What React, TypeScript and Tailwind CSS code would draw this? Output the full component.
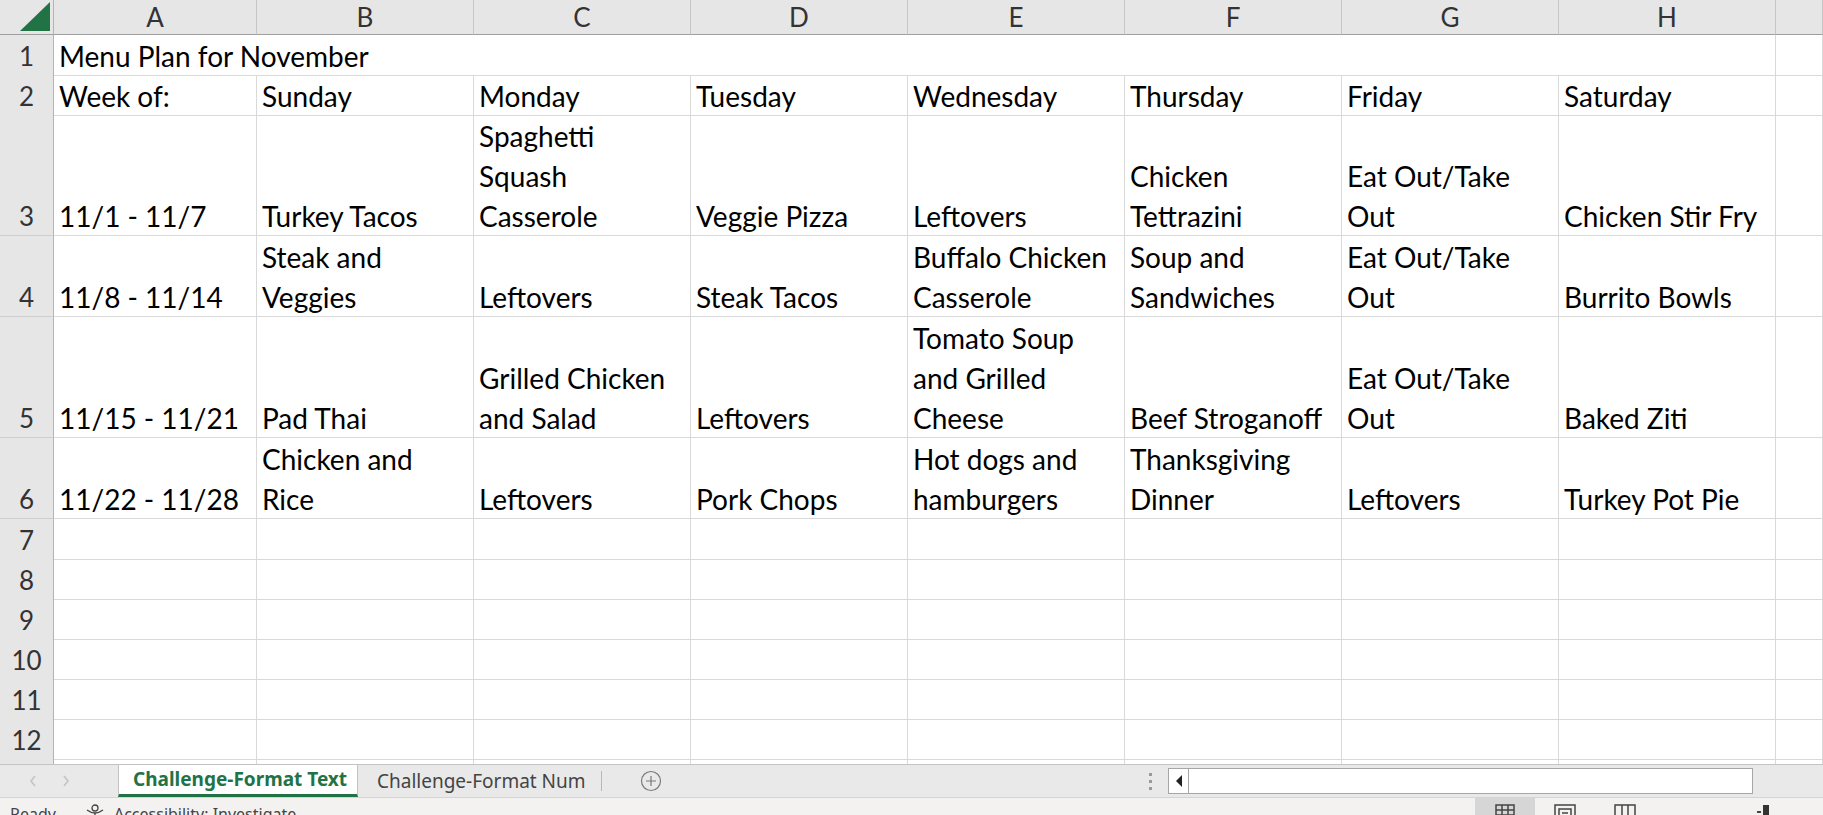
import React from "react";

type RowDef = { n: number; h: string; cells: string[][] };

const GRID = "grid grid-cols-[54px_203px_repeat(7,217px)_1fr]";

const rows: RowDef[] = [
  {
    n: 2,
    h: "h-[40px]",
    cells: [["Week of:"], ["Sunday"], ["Monday"], ["Tuesday"], ["Wednesday"], ["Thursday"], ["Friday"], ["Saturday"], []],
  },
  {
    n: 3,
    h: "h-[121px]",
    cells: [
      ["11/1 - 11/7"],
      ["Turkey Tacos"],
      ["Spaghetti", "Squash", "Casserole"],
      ["Veggie Pizza"],
      ["Leftovers"],
      ["Chicken", "Tettrazini"],
      ["Eat Out/Take", "Out"],
      ["Chicken Stir Fry"],
      [],
    ],
  },
  {
    n: 4,
    h: "h-[81px]",
    cells: [
      ["11/8 - 11/14"],
      ["Steak and", "Veggies"],
      ["Leftovers"],
      ["Steak Tacos"],
      ["Buffalo Chicken", "Casserole"],
      ["Soup and", "Sandwiches"],
      ["Eat Out/Take", "Out"],
      ["Burrito Bowls"],
      [],
    ],
  },
  {
    n: 5,
    h: "h-[121px]",
    cells: [
      ["11/15 - 11/21"],
      ["Pad Thai"],
      ["Grilled Chicken", "and Salad"],
      ["Leftovers"],
      ["Tomato Soup", "and Grilled", "Cheese"],
      ["Beef Stroganoff"],
      ["Eat Out/Take", "Out"],
      ["Baked Ziti"],
      [],
    ],
  },
  {
    n: 6,
    h: "h-[81px]",
    cells: [
      ["11/22 - 11/28"],
      ["Chicken and", "Rice"],
      ["Leftovers"],
      ["Pork Chops"],
      ["Hot dogs and", "hamburgers"],
      ["Thanksgiving", "Dinner"],
      ["Leftovers"],
      ["Turkey Pot Pie"],
      [],
    ],
  },
];

const emptyRows = [7, 8, 9, 10, 11, 12, 13];

function RowHeader({ n }: { n: number | string }) {
  return (
    <div className="flex items-end justify-center border-r border-b border-r-[#b4b4b4] border-b-[#cfcfcf] bg-[#e6e6e6]">
      <div className="translate-y-[1px] text-[26px] leading-[40px] text-[#333]">{n}</div>
    </div>
  );
}

function Cell({ lines, className = "" }: { lines: string[]; className?: string }) {
  return (
    <div className={`flex items-end whitespace-nowrap border-r border-b border-[#d9d9d9] pl-[5px] ${className}`}>
      <div className="translate-y-[1px] text-[28px] leading-[40px] text-black">
        {lines.map((l, i) => (
          <div key={i}>{l}</div>
        ))}
      </div>
    </div>
  );
}

function ColHeaders() {
  const letters = ["A", "B", "C", "D", "E", "F", "G", "H", ""];
  return (
    <div className={`${GRID} h-[35px]`}>
      <div className="relative border-r border-b border-r-[#b4b4b4] border-b-[#9f9f9f] bg-[#e6e6e6]">
        <svg className="absolute left-[19px] top-[2px]" width="32" height="30" viewBox="0 0 32 30">
          <polygon points="1,29 31,29 31,0" fill="#217346" />
        </svg>
      </div>
      {letters.map((l, i) => (
        <div
          key={i}
          className="flex items-center justify-center border-r border-b border-r-[#c6c6c6] border-b-[#9f9f9f] bg-[#e6e6e6] text-[26px] leading-[34px] text-[#333]"
        >
          {l}
        </div>
      ))}
    </div>
  );
}

function Sheet() {
  return (
    <div className="h-[765px] overflow-hidden bg-white font-['Lato',sans-serif]">
      <ColHeaders />
      <div className={`${GRID} h-[40px]`}>
        <RowHeader n={1} />
        <Cell lines={["Menu Plan for November"]} className="col-span-8" />
        <Cell lines={[]} />
      </div>
      {rows.map((r) => (
        <div key={r.n} className={`${GRID} ${r.h}`}>
          <RowHeader n={r.n} />
          {r.cells.map((c, i) => (
            <Cell key={i} lines={c} />
          ))}
        </div>
      ))}
      {emptyRows.map((n) => (
        <div key={n} className={`${GRID} h-[40px]`}>
          <RowHeader n={n} />
          {Array.from({ length: 9 }).map((_, i) => (
            <Cell key={i} lines={[]} />
          ))}
        </div>
      ))}
    </div>
  );
}

function TabBar() {
  return (
    <div className="flex h-[33px] border-t border-[#c3c3c3] bg-[#e9e9e9] font-['Noto_Sans',sans-serif]">
      <div className="flex w-[118px] items-center">
        <svg className="ml-[29px]" width="8" height="14" viewBox="0 0 8 14">
          <path d="M6 2 L2 7 L6 12" stroke="#c4c4c4" strokeWidth="1.6" fill="none" />
        </svg>
        <svg className="ml-[25px]" width="8" height="14" viewBox="0 0 8 14">
          <path d="M2 2 L6 7 L2 12" stroke="#c4c4c4" strokeWidth="1.6" fill="none" />
        </svg>
      </div>
      <div className="flex w-[240px] items-center border-x border-b-[3px] border-x-[#c3c3c3] border-b-[#217346] bg-white pl-[14px] text-[19px] font-bold text-[#217346]">
        Challenge-Format Text
      </div>
      <div className="flex w-[243px] items-center pl-[19px] text-[19px] text-[#444]">Challenge-Format Num</div>
      <div className="my-[6px] w-px bg-[#b8b8b8]" />
      <div className="flex w-[98px] items-center justify-center">
        <svg width="22" height="22" viewBox="0 0 22 22">
          <circle cx="11" cy="11" r="9.5" stroke="#7a7a7a" strokeWidth="1.2" fill="none" />
          <path d="M11 6 V16 M6 11 H16" stroke="#7a7a7a" strokeWidth="1.2" />
        </svg>
      </div>
      <div className="w-[440px]" />
      <div className="flex w-[20px] flex-col items-center justify-center gap-[4px]">
        <div className="h-[3px] w-[3px] bg-[#9a9a9a]" />
        <div className="h-[3px] w-[3px] bg-[#9a9a9a]" />
        <div className="h-[3px] w-[3px] bg-[#9a9a9a]" />
      </div>
      <div className="w-[8px]" />
      <div className="flex h-[26px] w-[585px] self-center border border-[#a6a6a6] bg-white">
        <div className="flex w-[20px] items-center justify-center border-r border-[#a6a6a6]">
          <svg width="8" height="12" viewBox="0 0 8 12">
            <polygon points="7,0 7,12 1,6" fill="#222" />
          </svg>
        </div>
      </div>
      <div className="flex-1" />
    </div>
  );
}

function StatusBar() {
  return (
    <div className="flex h-[18px] overflow-hidden border-t border-[#d4d4d4] bg-[#f3f2f1] font-['Noto_Sans',sans-serif] text-[16px] text-[#444]">
      <div className="flex h-[30px] items-start pl-[10px] pt-[6px] leading-[20px]">
        <span>Ready</span>
        <svg className="ml-[28px] mt-[-1px]" width="22" height="22" viewBox="0 0 22 22">
          <circle cx="11" cy="5" r="3" stroke="#444" strokeWidth="1.3" fill="none" />
          <path d="M3 7 Q7 10 11 10 Q15 10 19 7" stroke="#444" strokeWidth="1.3" fill="none" />
          <path d="M11 10 V15 M8 20 L11 15 L14 20" stroke="#444" strokeWidth="1.3" fill="none" />
        </svg>
        <span className="ml-[8px]">Accessibility: Investigate</span>
      </div>
      <div className="flex-1" />
      <div className="flex w-[60px] justify-center bg-[#d6d6d6] pt-[6px]">
        <svg width="20" height="18" viewBox="0 0 20 18">
          <rect x="1" y="1" width="18" height="16" stroke="#444" strokeWidth="1.5" fill="none" />
          <path d="M7 1 V17 M13 1 V17 M1 6 H19 M1 11 H19" stroke="#444" strokeWidth="1.5" />
        </svg>
      </div>
      <div className="ml-[19px] pt-[6px]">
        <svg width="22" height="18" viewBox="0 0 22 18">
          <rect x="1" y="1" width="20" height="16" stroke="#444" strokeWidth="1.5" fill="none" />
          <rect x="5" y="5" width="12" height="12" stroke="#444" strokeWidth="1.5" fill="none" />
          <path d="M8 9 H14" stroke="#444" strokeWidth="1.5" />
        </svg>
      </div>
      <div className="ml-[38px] pt-[6px]">
        <svg width="22" height="18" viewBox="0 0 22 18">
          <rect x="1" y="1" width="20" height="16" stroke="#444" strokeWidth="1.5" fill="none" />
          <path d="M8 1 V17 M14 1 V17" stroke="#444" strokeWidth="1.5" />
        </svg>
      </div>
      <div className="ml-[121px] flex items-end">
        <div className="mb-[2px] h-[2px] w-[4px] bg-[#444]" />
        <div className="ml-[2px] h-[10px] w-[6px] bg-[#333]" />
      </div>
      <div className="w-[54px]" />
    </div>
  );
}

export default function App() {
  return (
    <div className="flex h-[815px] w-[1823px] flex-col overflow-hidden bg-white">
      <Sheet />
      <TabBar />
      <StatusBar />
    </div>
  );
}
